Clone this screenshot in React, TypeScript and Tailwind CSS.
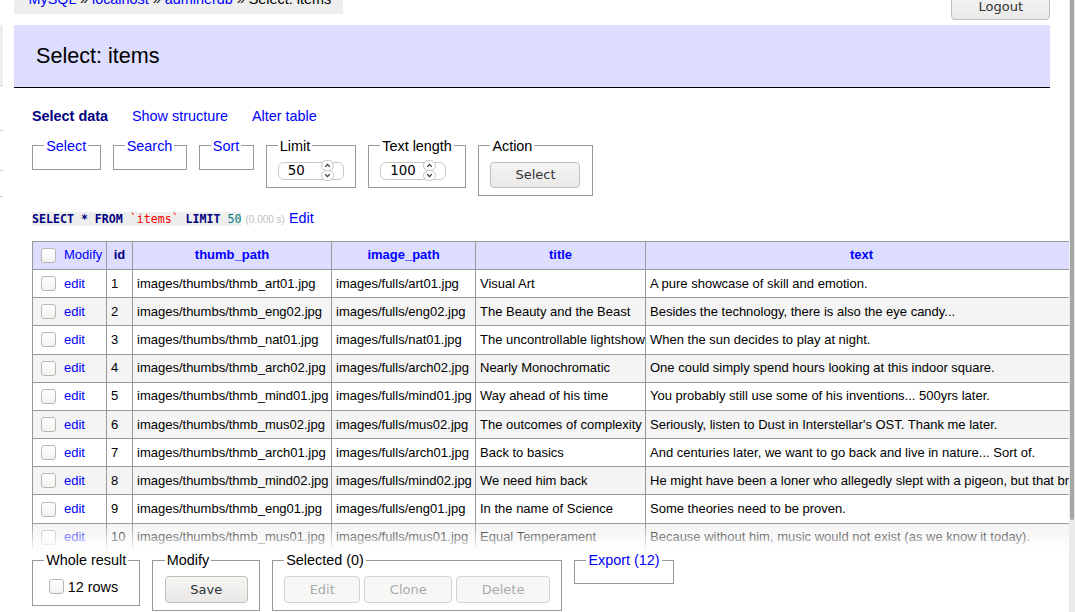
import type { ReactNode } from 'react'

const rows = [
  ['art01', 'Visual Art', 'A pure showcase of skill and emotion.'],
  ['eng02', 'The Beauty and the Beast', 'Besides the technology, there is also the eye candy...'],
  ['nat01', 'The uncontrollable lightshow', 'When the sun decides to play at night.'],
  ['arch02', 'Nearly Monochromatic', 'One could simply spend hours looking at this indoor square.'],
  ['mind01', 'Way ahead of his time', 'You probably still use some of his inventions... 500yrs later.'],
  ['mus02', 'The outcomes of complexity', "Seriously, listen to Dust in Interstellar's OST. Thank me later."],
  ['arch01', 'Back to basics', 'And centuries later, we want to go back and live in nature... Sort of.'],
  ['mind02', 'We need him back', 'He might have been a loner who allegedly slept with a pigeon, but that brain was something else.'],
  ['eng01', 'In the name of Science', 'Some theories need to be proven.'],
  ['mus01', 'Equal Temperament', 'Because without him, music would not exist (as we know it today).'],
]

const Check = () => (
  <span className="inline-block h-[15px] w-[15px] shrink-0 rounded-[3px] border border-[#bcb6b0] bg-[linear-gradient(#ffffff,#f3f2f1)]" />
)

const Btn = ({ children, disabled }: { children: ReactNode; disabled?: boolean }) => (
  <span
    className={
      disabled
        ? "inline-flex h-[27px] items-center justify-center rounded-[4px] border border-[#d6d3d0] bg-[#f7f7f6] px-[24.5px] font-['DejaVu_Sans',sans-serif] text-[13px] text-[#a8abab]"
        : "inline-flex h-[27px] items-center justify-center rounded-[4px] border border-[#c1bdb8] bg-[linear-gradient(#f6f5f4,#ebe9e7)] px-[24.5px] font-['DejaVu_Sans',sans-serif] text-[13px] text-[#2e3436]"
    }
  >
    {children}
  </span>
)

const NumInput = ({ value }: { value: string }) => (
  <div className="flex h-[18px] w-[66px] items-center rounded-[6px] border border-[#cdc7c2] bg-white pl-[9px] font-['DejaVu_Sans',sans-serif] text-[13.33px] leading-[16px] text-black">
    <span className="w-[33px]">{value}</span>
    <svg width="13" height="21" viewBox="0 0 13 21" className="-my-[2px]">
      <rect x="0.5" y="0.5" width="12" height="10" rx="5" fill="#fff" stroke="#c9c4bf" />
      <rect x="0.5" y="10.5" width="12" height="10" rx="5" fill="#fff" stroke="#c9c4bf" />
      <path d="M4.2 6.8 L6.5 4.4 L8.8 6.8" fill="none" stroke="#2e3436" strokeWidth="1.2" />
      <path d="M4.2 14.2 L6.5 16.6 L8.8 14.2" fill="none" stroke="#2e3436" strokeWidth="1.2" />
    </svg>
  </div>
)

const Fs = ({ legend, link, children }: { legend: string; link?: boolean; children?: ReactNode }) => (
  <fieldset className="shrink-0 border border-[#999] px-[11.25px] py-[7.2px]">
    <legend className={link ? 'px-[2px] text-[#0000ff]' : 'px-[2px]'}>{legend}</legend>
    {children}
  </fieldset>
)

export default function App() {
  return (
    <div className="relative flex h-[612px] w-[1075px] overflow-hidden bg-white font-['Liberation_Sans',Arial,sans-serif] text-[14.4px] leading-[18px] text-black">
      <div className="relative flex w-[1069px] shrink-0 overflow-hidden">
        {/* menu stub */}
        <div className="w-[3px] shrink-0 pt-[25px]">
          <div className="h-[61px] border-b border-[#ccc] bg-[#eee]" />
          <div className="mt-[44px] h-px bg-[#ccc]" />
          <div className="mt-[39px] h-px bg-[#ccc]" />
          <div className="mt-[25px] h-px bg-[#ccc]" />
        </div>

        <div className="min-w-0 flex-1 pl-[29px] pr-[19px]">
          <div className="flex h-[25px] items-start justify-between">
            <div className="-ml-[18px] h-[14px] overflow-hidden bg-[#eee] pl-[14.5px] pr-[12px]">
              <div className="-mt-[10px] whitespace-nowrap">
                <span className="text-[#0000ff]">MySQL</span> » <span className="text-[#0000ff]">localhost</span> »{' '}
                <span className="text-[#0000ff]">adminerdb</span> » Select: items
              </div>
            </div>
            <div className="-mt-[7px]">
              <span className="inline-flex h-[27px] items-center justify-center rounded-[4px] border border-[#c1bdb8] bg-[linear-gradient(#f6f5f4,#ebe9e7)] px-[26px] font-['DejaVu_Sans',sans-serif] text-[13px] text-[#2e3436]">
                Logout
              </span>
            </div>
          </div>

          <h2 className="-ml-[18px] mb-[19px] border-b border-black bg-[#ddf] px-[22px] py-[17.3px] text-[21.6px] leading-[27px] font-normal">
            Select: items
          </h2>

          <div className="flex h-[18px] gap-[24px]">
            <span className="font-bold text-[#000080]">Select data</span>
            <span className="text-[#0000ff]">Show structure</span>
            <span className="text-[#0000ff]">Alter table</span>
          </div>

          <div className="mt-[12px] flex items-start gap-[12px]">
            <Fs legend="Select" link />
            <Fs legend="Search" link />
            <Fs legend="Sort" link />
            <Fs legend="Limit">
              <NumInput value="50" />
            </Fs>
            <Fs legend="Text length">
              <NumInput value="100" />
            </Fs>
            <Fs legend="Action">
              <div className="h-[26px]">
                <span className="inline-flex h-[26px] items-center justify-center rounded-[4px] border border-[#c1bdb8] bg-[linear-gradient(#f6f5f4,#ebe9e7)] px-[24px] font-['DejaVu_Sans',sans-serif] text-[13px] text-[#2e3436]">
                  Select
                </span>
              </div>
            </Fs>
          </div>

          <p className="mt-[13px] h-[18px] whitespace-nowrap">
            <code className="bg-[#eee] font-['DejaVu_Sans_Mono',monospace] text-[11.6px]">
              <b className="text-[#000080]">SELECT</b> <b className="text-[#000080]">*</b>{' '}
              <b className="text-[#000080]">FROM</b> <span className="text-[#ff0000]">`items`</span>{' '}
              <b className="text-[#000080]">LIMIT</b> <span className="text-[#008080]">50</span>
            </code>{' '}
            <span className="text-[10px] text-[#c0c0c0]">(0.000 s)</span> <span className="text-[#0000ff]">Edit</span>
          </p>

          <table className="mt-[14px] w-[1045px] table-fixed border-collapse border border-[#999] text-[13px] leading-[16px]">
            <colgroup>
              <col className="w-[74px]" />
              <col className="w-[26px]" />
              <col className="w-[199px]" />
              <col className="w-[144px]" />
              <col className="w-[170px]" />
              <col className="w-[432px]" />
            </colgroup>
            <thead>
              <tr className="h-[28px] bg-[#ddf]">
                <td className="border border-[#999] pl-[8px]">
                  <div className="flex items-center gap-[8px]">
                    <Check />
                    <span className="text-[#0000ff]">Modify</span>
                  </div>
                </td>
                <th className="border border-[#999] text-center font-bold text-[#000080]">id</th>
                <th className="border border-[#999] text-center font-bold text-[#0000ff]">thumb_path</th>
                <th className="border border-[#999] text-center font-bold text-[#0000ff]">image_path</th>
                <th className="border border-[#999] text-center font-bold text-[#0000ff]">title</th>
                <th className="border border-[#999] text-center font-bold text-[#0000ff]">text</th>
              </tr>
            </thead>
            <tbody>
              {rows.map(([file, title, text], i) => (
                <tr key={file} className={i % 2 === 1 ? 'h-[28.2px] bg-[#f4f4f4]' : 'h-[28.2px] bg-white'}>
                  <td className="border border-[#999] pl-[8px]">
                    <div className="flex items-center gap-[8px]">
                      <Check />
                      <span className="text-[#0000ff]">edit</span>
                    </div>
                  </td>
                  <td className="border border-[#999] px-[4px]">{i + 1}</td>
                  <td className="overflow-hidden whitespace-nowrap border border-[#999] px-[4px]">
                    images/thumbs/thmb_{file}.jpg
                  </td>
                  <td className="overflow-hidden whitespace-nowrap border border-[#999] px-[4px]">
                    images/fulls/{file}.jpg
                  </td>
                  <td className="overflow-hidden whitespace-nowrap border border-[#999] px-[4px]">{title}</td>
                  <td className="overflow-hidden whitespace-nowrap border border-[#999] px-[4px]">{text}</td>
                </tr>
              ))}
            </tbody>
          </table>
        </div>

        {/* sticky footer over the table */}
        <div className="absolute bottom-0 left-0 h-[90px] w-full bg-[linear-gradient(to_bottom,rgba(255,255,255,0),#ffffff_30px)] pl-[32px] pt-[29px]">
          <div className="flex items-start gap-[12px]">
            <Fs legend="Whole result">
              <div className="flex h-[21.6px] items-center gap-[4px] pl-[4.5px]">
                <Check />
                <span>12 rows</span>
              </div>
            </Fs>
            <Fs legend="Modify">
              <Btn>Save</Btn>
            </Fs>
            <Fs legend="Selected (0)">
              <div className="flex gap-[4px]">
                <Btn disabled>Edit</Btn>
                <Btn disabled>Clone</Btn>
                <Btn disabled>Delete</Btn>
              </div>
            </Fs>
            <Fs legend="Export (12)" link />
          </div>
        </div>
      </div>

      {/* scrollbar */}
      <div className="w-[6px] shrink-0 bg-[#ebebeb]">
        <div className="ml-[1px] h-[520px] w-[4px] rounded-b-[2px] bg-[#a6a6a6]" />
      </div>
    </div>
  )
}
